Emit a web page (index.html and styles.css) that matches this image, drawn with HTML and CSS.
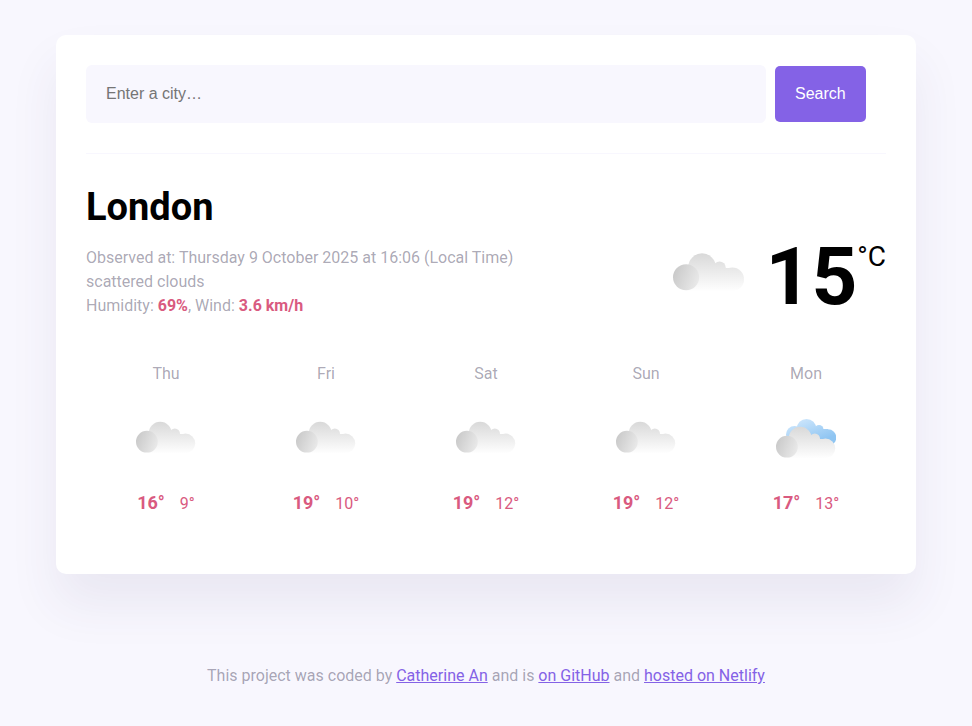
FILE: index.html
```
<!DOCTYPE html>
<html lang="en">
<head>
    <meta charset="UTF-8">
    <meta name="viewport" content="width=device-width, initial-scale=1.0">
    <title>Weather App</title>
    <link rel="stylesheet" href="styles.css">
</head>
<body>
    <!-- shared weather icons -->
    <svg class="icon-defs" aria-hidden="true">
        <defs>
            <linearGradient id="grey" gradientUnits="userSpaceOnUse" x1="0" y1="3" x2="0" y2="34">
                <stop offset="0" stop-color="#d9d9d9"/>
                <stop offset="1" stop-color="#fefefe"/>
            </linearGradient>
            <linearGradient id="ball" x1="0" y1="0.3" x2="1" y2="0.7">
                <stop offset="0" stop-color="#c9c9c9"/>
                <stop offset="1" stop-color="#eaeaea"/>
            </linearGradient>
            <linearGradient id="blue" gradientUnits="userSpaceOnUse" x1="24" y1="0" x2="34" y2="26">
                <stop offset="0" stop-color="#cde6fc"/>
                <stop offset="1" stop-color="#8fc5f2"/>
            </linearGradient>
            <symbol id="cloud" viewBox="0 0 60 45">
                <g fill="url(#grey)">
                    <circle cx="24.200" cy="14.300" r="11.500"/>
                    <circle cx="38.800" cy="14.800" r="5.200"/>
                    <circle cx="49.500" cy="24.300" r="9.700"/>
                    <path d="M14 15H49.500V34H11V20Z"/>
                </g>
                <circle cx="10.900" cy="22.700" r="10.900" fill="url(#ball)"/>
            </symbol>
            <symbol id="clouds" viewBox="0 0 60 45">
                <g fill="url(#blue)">
                    <circle cx="18.500" cy="15.500" r="8.500"/>
                    <circle cx="30.500" cy="9.800" r="9.800"/>
                    <circle cx="43" cy="10.500" r="4.500"/>
                    <circle cx="52" cy="18.500" r="8.300"/>
                    <path d="M18 10H52V26H18Z"/>
                </g>
                <use href="#cloud" y="5" width="60" height="45"/>
            </symbol>
        </defs>
    </svg>

    <div class="weather-app">
        <header>
            <form class="search-form">
                <input type="search" placeholder="Enter a city…" aria-label="Enter a city" class="search-input" required>
                <button type="submit" class="search-button">Search</button>
            </form>
        </header>
        <main>
            <h1>London</h1>
            <div class="current">
                <p class="details">
                    Observed at: Thursday 9 October 2025 at 16:06 (Local Time)<br>
                    scattered clouds<br>
                    Humidity: <strong>69%</strong>, Wind: <strong>3.6 km/h</strong>
                </p>
                <div class="temperature">
                    <svg class="temperature-icon" aria-hidden="true"><use href="#cloud"/></svg>
                    <div class="temperature-value">15</div>
                    <div class="temperature-unit">°C</div>
                </div>
            </div>
            <div class="forecast">
                <div class="forecast-day">
                    <div>Thu</div>
                    <svg class="forecast-icon" aria-hidden="true"><use href="#cloud"/></svg>
                    <div class="forecast-temps"><strong>16°</strong><span>9°</span></div>
                </div>
                <div class="forecast-day">
                    <div>Fri</div>
                    <svg class="forecast-icon" aria-hidden="true"><use href="#cloud"/></svg>
                    <div class="forecast-temps"><strong>19°</strong><span>10°</span></div>
                </div>
                <div class="forecast-day">
                    <div>Sat</div>
                    <svg class="forecast-icon" aria-hidden="true"><use href="#cloud"/></svg>
                    <div class="forecast-temps"><strong>19°</strong><span>12°</span></div>
                </div>
                <div class="forecast-day">
                    <div>Sun</div>
                    <svg class="forecast-icon" aria-hidden="true"><use href="#cloud"/></svg>
                    <div class="forecast-temps"><strong>19°</strong><span>12°</span></div>
                </div>
                <div class="forecast-day">
                    <div>Mon</div>
                    <svg class="forecast-icon" aria-hidden="true"><use href="#clouds"/></svg>
                    <div class="forecast-temps"><strong>17°</strong><span>13°</span></div>
                </div>
            </div>
        </main>
    </div>
    <footer>
        This project was coded by <a href="#">Catherine An</a> and is
        <a href="#">on GitHub</a> and <a href="#">hosted on Netlify</a>
    </footer>
</body>
</html>
```
FILE: styles.css
```
* {
    box-sizing: border-box;
    margin: 0;
    padding: 0;
}
body {
    background-color: #f8f7fe;
    color: rgba(39, 33, 66, 0.4);
    font-family: Roboto, sans-serif;
    font-size: 16px;
    line-height: 24px;
    padding: 35px 20px;
}
.icon-defs {
    position: absolute;
    width: 0;
    height: 0;
}
.weather-app {
    max-width: 860px;
    margin: 0 auto;
    padding: 30px 30px 58px;
    background-color: white;
    border-radius: 10px;
    box-shadow: 0 30px 50px rgba(65, 50, 100, 0.08);
}
header {
    border-bottom: 1px solid #f8f7fe;
    padding-bottom: 30px;
    margin-bottom: 30px;
}
.search-form {
    display: flex;
    align-items: center;
    gap: 9px;
}
.search-input {
    width: 85%;
    height: 58px;
    padding: 0 20px;
    border: none;
    border-radius: 6px;
    background-color: #f8f7fe;
    font-family: "Liberation Sans", Arial, sans-serif;
    font-size: 16px;
    appearance: none;
}
.search-button {
    height: 56px;
    padding: 0 20px;
    border: none;
    border-radius: 5px;
    background-color: #8462e6;
    color: white;
    font-family: "Liberation Sans", Arial, sans-serif;
    font-size: 16px;
}
h1 {
    color: black;
    font-size: 38px;
    line-height: 46px;
    margin-bottom: 16px;
}
.current {
    display: flex;
    justify-content: space-between;
    align-items: flex-start;
}
.details strong,
.forecast-temps {
    color: #d95a80;
}
.temperature {
    display: flex;
    align-items: center;
    color: black;
}
.temperature-icon {
    width: 72px;
    height: 54px;
    margin-right: 21px;
}
.temperature-value {
    font-size: 80px;
    font-weight: bold;
    line-height: 62px;
}
.temperature-unit {
    align-self: flex-start;
    font-size: 28px;
    line-height: 22px;
}
.forecast {
    display: grid;
    grid-template-columns: repeat(5, 1fr);
    margin-top: 44px;
}
.forecast-day {
    text-align: center;
}
.forecast-icon {
    display: block;
    width: 60px;
    height: 45px;
    margin: 33px auto 27px;
}
.forecast-temps {
    display: flex;
    justify-content: center;
    align-items: baseline;
    gap: 15px;
}
.forecast-temps strong {
    font-size: 18px;
}
footer {
    margin-top: 90px;
    text-align: center;
}
footer a {
    color: #8462e6;
}
```
